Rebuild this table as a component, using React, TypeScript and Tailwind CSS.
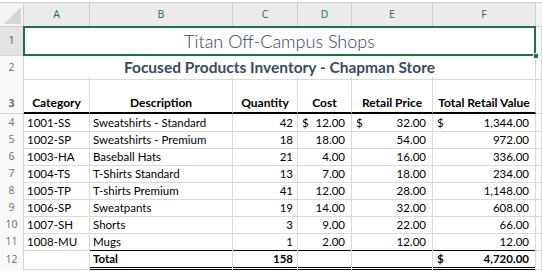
import type { ReactNode } from "react";

const grid = "grid grid-cols-[24px_66px_143px_65px_54px_81px_103px_1fr]";
const line = "border-[#d9d9d9]";
const font = "font-['Lato',sans-serif]";

type Item = {
  cat: string;
  desc: string;
  qty: number;
  cost: string;
  price: string;
  total: string;
};

const items: Item[] = [
  { cat: "1001-SS", desc: "Sweatshirts - Standard", qty: 42, cost: "12.00", price: "32.00", total: "1,344.00" },
  { cat: "1002-SP", desc: "Sweatshirts - Premium", qty: 18, cost: "18.00", price: "54.00", total: "972.00" },
  { cat: "1003-HA", desc: "Baseball Hats", qty: 21, cost: "4.00", price: "16.00", total: "336.00" },
  { cat: "1004-TS", desc: "T-Shirts Standard", qty: 13, cost: "7.00", price: "18.00", total: "234.00" },
  { cat: "1005-TP", desc: "T-shirts Premium", qty: 41, cost: "12.00", price: "28.00", total: "1,148.00" },
  { cat: "1006-SP", desc: "Sweatpants", qty: 19, cost: "14.00", price: "32.00", total: "608.00" },
  { cat: "1007-SH", desc: "Shorts", qty: 3, cost: "9.00", price: "22.00", total: "66.00" },
  { cat: "1008-MU", desc: "Mugs", qty: 1, cost: "2.00", price: "12.00", total: "12.00" },
];

function RowLabel({ n, active, className = "" }: { n: number; active?: boolean; className?: string }) {
  return (
    <div
      className={`flex justify-center border-r border-b border-[#d4d4d4] font-['Open_Sans',sans-serif] text-[10.5px] ${
        active ? "bg-[#e3e3e3] text-[#1e7145]" : "bg-[#f9f9f9] text-[#6f6f6f]"
      } ${className || "items-center"}`}
    >
      {n}
    </div>
  );
}

function Money({ value, dollar, bold }: { value: string; dollar?: boolean; bold?: boolean }) {
  return (
    <div className={`flex h-full items-center justify-between pl-[4px] pr-[6px] ${bold ? "font-bold" : ""}`}>
      <span>{dollar ? "$" : ""}</span>
      <span>{value}</span>
    </div>
  );
}

function Cell({ children, className = "" }: { children?: ReactNode; className?: string }) {
  return <div className={`border-r border-b ${line} ${className}`}>{children}</div>;
}

export default function App() {
  const cols = ["A", "B", "C", "D", "E", "F"];

  return (
    <div className={`h-[271px] w-[542px] overflow-hidden bg-white text-black ${font}`}>
      <div className="h-[3px] border-b border-[#cfcfcf] bg-white" />

      {/* column headers */}
      <div className={`${grid} h-[24px]`}>
        <div className="relative border-r border-b border-[#cfcfcf] bg-[#f3f3f3]">
          <svg className="absolute right-[2px] bottom-[2px]" width="17" height="17" viewBox="0 0 17 17">
            <polygon points="17,0 17,17 0,17" fill="#d6d6d6" />
          </svg>
        </div>
        {cols.map((c) => (
          <div
            key={c}
            className="flex items-center justify-center border-r border-b border-[#cfcfcf] bg-[#ebebeb] font-['Open_Sans',sans-serif] text-[10.5px] text-[#1e7145]"
          >
            {c}
          </div>
        ))}
        <div className="border-b border-[#cfcfcf] bg-[#f3f3f3]" />
      </div>

      {/* row 1 */}
      <div className={`${grid} h-[29px]`}>
        <RowLabel n={1} active />
        <div className={`relative col-span-6 flex items-center justify-center border-r border-b ${line} text-[18px] font-light text-[#33425a]`}>
          Titan Off-Campus Shops
          <div className="pointer-events-none absolute -top-px -left-px -right-px -bottom-px border-2 border-[#1e7145]" />
          <div className="absolute -right-[4px] -bottom-[4px] h-[6px] w-[6px] border border-white bg-[#1e7145]" />
        </div>
        <Cell />
      </div>

      {/* row 2 */}
      <div className={`${grid} h-[21px]`}>
        <RowLabel n={2} />
        <div className={`col-span-6 flex items-center justify-center border-r border-b ${line} text-[15.5px] font-bold text-[#3c4a60]`}>
          Focused Products Inventory - Chapman Store
        </div>
        <Cell />
      </div>

      {/* row 3 */}
      <div className={`${grid} h-[37px] text-[12px] font-bold`}>
        <RowLabel n={3} className="items-end pb-[1px]" />
        {["Category", "Description", "Quantity", "Cost", "Retail Price", "Total Retail Value"].map((h) => (
          <div key={h} className="flex items-end justify-center border-r border-b-2 border-r-[#d9d9d9] border-b-black">
            {h}
          </div>
        ))}
        <Cell />
      </div>

      {/* data rows */}
      {items.map((it, i) => {
        const last = i === items.length - 1;
        const b = last ? "border-b-black" : "";
        return (
          <div key={it.cat} className={`${grid} h-[17px] text-[11.5px]`}>
            <RowLabel n={i + 4} />
            <Cell className="flex items-center pl-[3px]">{it.cat}</Cell>
            <Cell className={`flex items-center pl-[3px] ${b}`}>{it.desc}</Cell>
            <Cell className={`flex items-center justify-end pr-[4px] ${b}`}>{it.qty}</Cell>
            <Cell className={b}>
              <Money value={it.cost} dollar={i === 0} />
            </Cell>
            <Cell className={b}>
              <Money value={it.price} dollar={i === 0} />
            </Cell>
            <Cell className={b}>
              <Money value={it.total} dollar={i === 0} />
            </Cell>
            <Cell />
          </div>
        );
      })}

      {/* row 12 */}
      <div className={`${grid} h-[17px] text-[11.5px]`}>
        <RowLabel n={12} />
        <Cell />
        <div className="flex items-center border-r border-r-[#d9d9d9] border-b-[3px] border-double border-b-black pl-[3px] font-bold">Total</div>
        <div className="flex items-center justify-end border-r border-r-[#d9d9d9] border-b-[3px] border-double border-b-black pr-[4px] font-bold">158</div>
        <div className="border-r border-r-[#d9d9d9] border-b-[3px] border-double border-b-black" />
        <div className="border-r border-r-[#d9d9d9] border-b-[3px] border-double border-b-black" />
        <div className="border-r border-r-[#d9d9d9] border-b-[3px] border-double border-b-black">
          <Money value="4,720.00" dollar bold />
        </div>
        <Cell />
      </div>

      {/* row 13 */}
      <div className={`${grid} h-[17px]`}>
        <div className="border-r border-[#d4d4d4] bg-[#f9f9f9]" />
        {Array.from({ length: 6 }).map((_, i) => (
          <div key={i} className={`border-r ${line}`} />
        ))}
        <div />
      </div>
    </div>
  );
}
